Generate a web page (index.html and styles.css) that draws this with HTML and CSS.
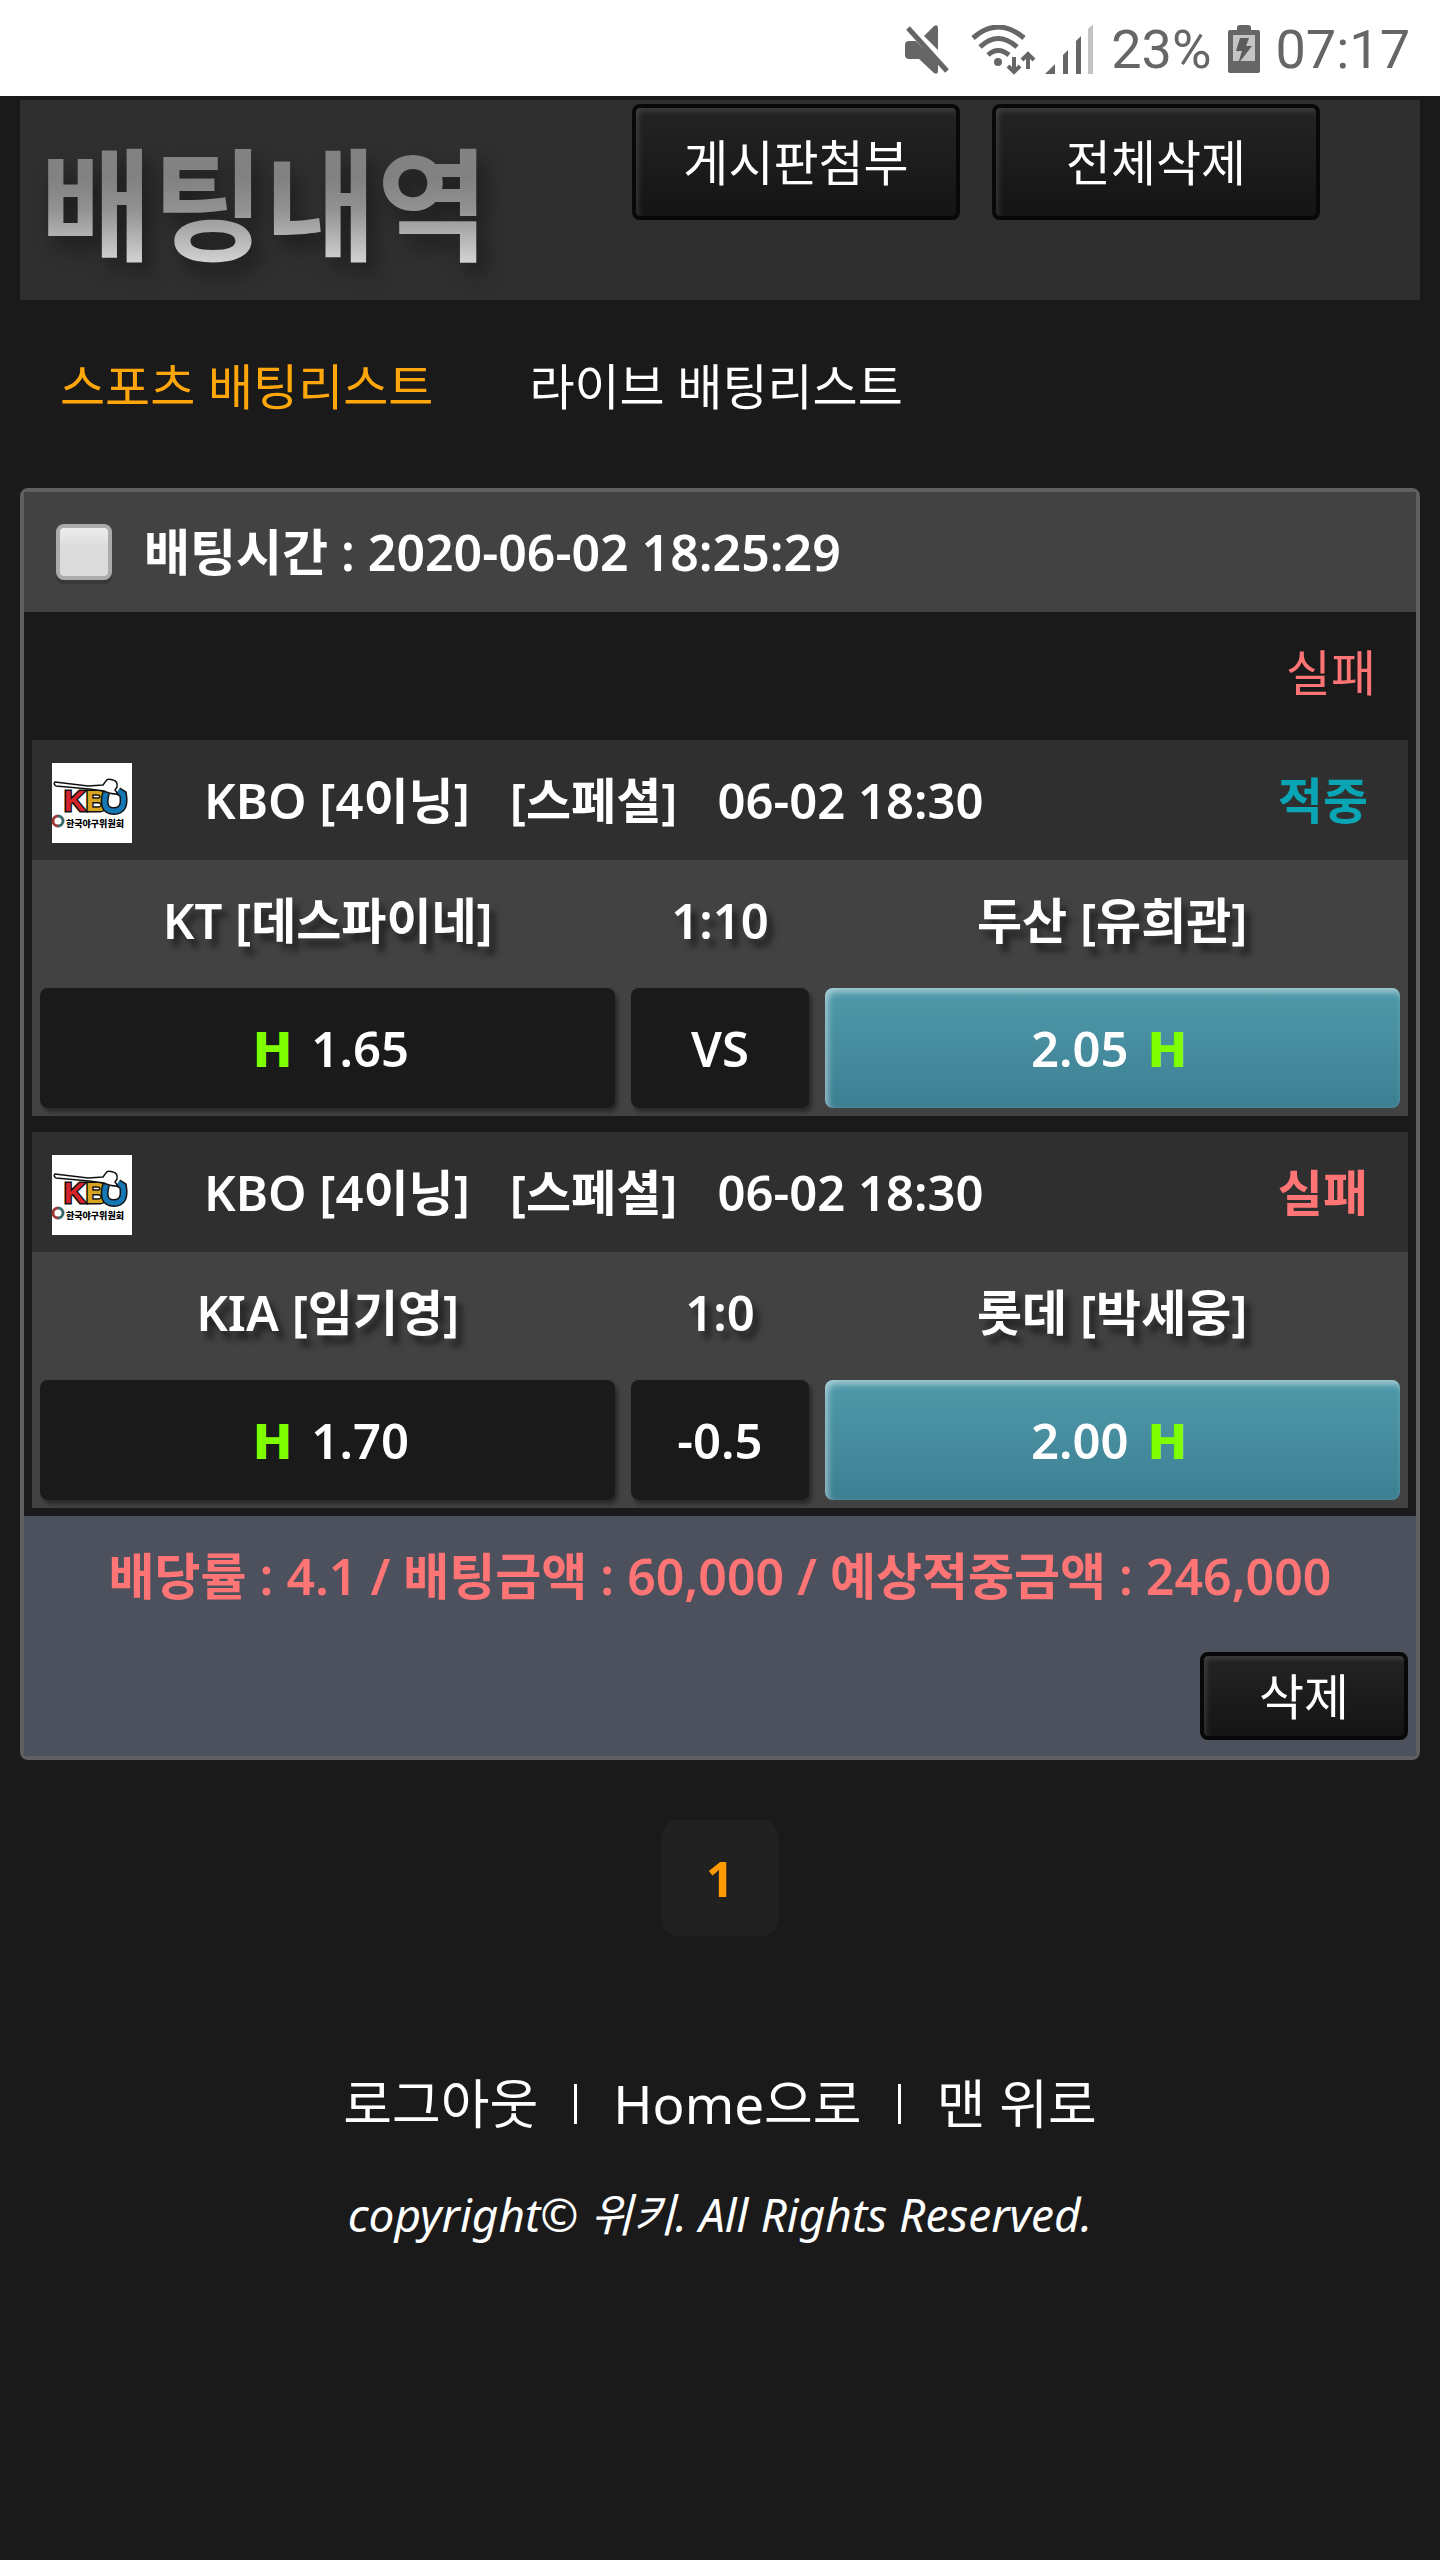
FILE: index.html
```html
<!DOCTYPE html>
<html lang="ko">
<head>
    <meta charset="UTF-8">
    <meta name="viewport" content="width=device-width, initial-scale=1.0">
    <title>배팅내역</title>
    <link rel="stylesheet" href="styles.css">
</head>

<body>
    <div class="status-bar">
        <svg class="icon-mute" width="46" height="50" viewBox="0 0 46 50">
            <path d="M4 16h7L33 38v8q0 4-4 2L14 34H4q-4 0-4-4V20q0-4 4-4z" fill="#666"/>
            <path d="M19 11L29 1q4-2 4 2v22z" fill="#666"/>
            <path d="M5 1l39 43" stroke="#fff" stroke-width="5"/>
            <path d="M3 3l39 43" stroke="#666" stroke-width="5"/>
        </svg>
        <svg class="icon-wifi" width="66" height="50" viewBox="0 0 66 50">
            <g fill="none" stroke="#666" stroke-width="5">
                <path d="M2 13Q27-9 53 13"/>
                <path d="M9 22Q27 5 46 22"/>
                <path d="M17 30Q27 21 38 30"/>
            </g>
            <circle cx="27" cy="37" r="4" fill="#666"/>
            <path d="M43 32v15M37 41l6 6 6-6M57 44V29M51 35l6-6 6 6" fill="none" stroke="#666" stroke-width="4"/>
        </svg>
        <svg class="icon-signal" width="50" height="50" viewBox="0 0 50 50">
            <path d="M0 49l10-10v10zM18 49V30l5-5v24zM31 49V16l5-5v38z" fill="#666"/>
            <path d="M43 49V4l5-5v50z" fill="#c4c4c4"/>
        </svg>
        <span>23%</span>
        <svg class="icon-battery" width="32" height="50" viewBox="0 0 32 50">
            <path d="M9 5V3q0-3 3-3h8q3 0 3 3v2h7q2 0 2 2v39q0 2-2 2H2q-2 0-2-2V7q0-2 2-2z" fill="#666"/>
            <path d="M5 10h22v26H5z" fill="#c4c4c4"/>
            <path d="M12 13h9l-3 8h6L10 39l4-13H8z" fill="#5c5c5c"/>
        </svg>
        <span>07:17</span>
    </div>

    <header class="page-header">
        <h1>배팅내역</h1>
        <div class="header-buttons">
            <button type="button" class="btn">게시판첨부</button>
            <button type="button" class="btn">전체삭제</button>
        </div>
    </header>

    <nav class="tabs">
        <a href="#" class="active">스포츠 배팅리스트</a>
        <a href="#">라이브 배팅리스트</a>
    </nav>

    <main class="bet">
        <div class="bet-time">
            <input type="checkbox" id="bet1">
            <label for="bet1">배팅시간 : 2020-06-02 18:25:29</label>
        </div>
        <div class="bet-result fail">실패</div>

        <div class="match">
            <div class="match-head">
                <svg class="league-logo" width="80" height="80" viewBox="0 0 80 80">
                    <rect width="80" height="80" fill="#fff"/>
                    <text class="logo-letters" x="12" y="48"><tspan fill="#d8232a">K</tspan><tspan fill="#d9a520">B</tspan></text>
                    <path d="M54 30q-5 18 8 18 12 0 9-17l-5-3" fill="none" stroke="#111" stroke-width="8"/>
                    <path d="M54 30q-5 18 8 18 12 0 9-17l-5-3" fill="none" stroke="#1677b5" stroke-width="5"/>
                    <path d="M3 19l33 4 15-1 3-4q1-3 7-1 5 1 4 7l-2 3 3 4q-9 0-14-3l-15-2-33-3q-3-2-1-4z" fill="#fff" stroke="#111" stroke-width="1.5"/>
                    <path d="M6 53a5 5 0 0 0 0 10" fill="none" stroke="#a33a3a" stroke-width="3"/>
                    <path d="M6 53a5 5 0 0 1 0 10" fill="none" stroke="#3a6a6a" stroke-width="3"/>
                    <text class="logo-name" x="14" y="64">한국야구위원회</text>
                </svg>
                <div class="match-info">
                    <span>KBO [4이닝]</span>
                    <span>[스페셜]</span>
                    <span>06-02 18:30</span>
                </div>
                <strong class="win">적중</strong>
            </div>
            <div class="match-body">
                <div class="team">KT [데스파이네]</div>
                <div class="team">1:10</div>
                <div class="team">두산 [유희관]</div>
                <div class="odds"><b class="handi">H</b> 1.65</div>
                <div class="odds">VS</div>
                <div class="odds picked">2.05 <b class="handi">H</b></div>
            </div>
        </div>

        <div class="match">
            <div class="match-head">
                <svg class="league-logo" width="80" height="80" viewBox="0 0 80 80">
                    <rect width="80" height="80" fill="#fff"/>
                    <text class="logo-letters" x="12" y="48"><tspan fill="#d8232a">K</tspan><tspan fill="#d9a520">B</tspan></text>
                    <path d="M54 30q-5 18 8 18 12 0 9-17l-5-3" fill="none" stroke="#111" stroke-width="8"/>
                    <path d="M54 30q-5 18 8 18 12 0 9-17l-5-3" fill="none" stroke="#1677b5" stroke-width="5"/>
                    <path d="M3 19l33 4 15-1 3-4q1-3 7-1 5 1 4 7l-2 3 3 4q-9 0-14-3l-15-2-33-3q-3-2-1-4z" fill="#fff" stroke="#111" stroke-width="1.5"/>
                    <path d="M6 53a5 5 0 0 0 0 10" fill="none" stroke="#a33a3a" stroke-width="3"/>
                    <path d="M6 53a5 5 0 0 1 0 10" fill="none" stroke="#3a6a6a" stroke-width="3"/>
                    <text class="logo-name" x="14" y="64">한국야구위원회</text>
                </svg>
                <div class="match-info">
                    <span>KBO [4이닝]</span>
                    <span>[스페셜]</span>
                    <span>06-02 18:30</span>
                </div>
                <strong class="fail">실패</strong>
            </div>
            <div class="match-body">
                <div class="team">KIA [임기영]</div>
                <div class="team">1:0</div>
                <div class="team">롯데 [박세웅]</div>
                <div class="odds"><b class="handi">H</b> 1.70</div>
                <div class="odds">-0.5</div>
                <div class="odds picked">2.00 <b class="handi">H</b></div>
            </div>
        </div>

        <div class="bet-summary">
            <p>배당률 : 4.1 / 배팅금액 : 60,000 / 예상적중금액 : 246,000</p>
            <button type="button" class="btn btn-small">삭제</button>
        </div>
    </main>

    <div class="paging">
        <a href="#">1</a>
    </div>

    <footer>
        <div class="footer-links">
            <a href="#">로그아웃</a>
            <span class="bar"></span>
            <a href="#">Home으로</a>
            <span class="bar"></span>
            <a href="#">맨 위로</a>
        </div>
        <p class="copyright">copyright© 위키. All Rights Reserved.</p>
    </footer>
</body>
</html>
```
FILE: styles.css
```css
* {
    box-sizing: border-box;
}
body {
    margin: 0;
    min-height: 100vh;
    background-color: #1a1a1a;
    color: #fff;
    font-family: "Noto Sans", "Noto Sans CJK KR", sans-serif;
    font-size: 49px;
    font-weight: 400;
    line-height: 64px;
}
a {
    color: #fff;
    text-decoration: none;
}

/* phone status bar */
.status-bar {
    display: flex;
    justify-content: flex-end;
    align-items: center;
    height: 96px;
    padding: 4px 30px 0 0;
    background-color: #fff;
    color: #666;
    font-family: Roboto, sans-serif;
    font-size: 54px;
}
.icon-mute {
    margin-right: 20px;
}
.icon-wifi {
    margin-right: 8px;
}
.icon-signal,
.icon-battery {
    margin-right: 16px;
}
.icon-battery {
    margin-left: 16px;
}

/* title */
.page-header {
    display: flex;
    margin: 4px 20px 0;
    height: 200px;
    background-color: #2f2f2f;
}
.page-header h1 {
    margin: 0;
    padding: 32px 0 0 20px;
    width: 612px;
    font-size: 122px;
    font-weight: 700;
    line-height: 144px;
    color: transparent;
    background: linear-gradient(#828282 40%, #929292 55%, #d4d4d4 82%);
    -webkit-background-clip: text;
    background-clip: text;
    filter: drop-shadow(8px 12px 10px rgba(0, 0, 0, 0.4));
}
.header-buttons {
    display: flex;
    align-items: flex-start;
    gap: 32px;
    padding-top: 4px;
}
.btn {
    width: 328px;
    height: 116px;
    padding: 0;
    border: 4px solid #080808;
    border-radius: 8px;
    background: linear-gradient(#242424, #141414);
    box-shadow: inset 3px 3px 5px rgba(255, 255, 255, 0.12);
    color: #fff;
    font: inherit;
    cursor: pointer;
}
.btn-small {
    width: 208px;
    height: 88px;
}

.tabs {
    display: flex;
    gap: 96px;
    padding: 54px 60px 70px;
}
.tabs .active {
    color: #ffa60a;
}

/* one bet slip */
.bet {
    margin: 0 20px;
    border: 4px solid #5f5f5f;
    border-radius: 8px;
}
.bet-time {
    display: flex;
    align-items: center;
    gap: 32px;
    height: 120px;
    padding-left: 32px;
    background-color: #424242;
    font-size: 50px;
    font-weight: 600;
}
.bet-time input {
    appearance: none;
    width: 56px;
    height: 56px;
    margin: 0;
    border: 4px solid #acacac;
    border-radius: 8px;
    background: linear-gradient(#ececec, #dcdcdc 40%);
    box-shadow: 0 4px 0 #383838;
}
.bet-result {
    height: 128px;
    padding: 28px 40px;
    text-align: right;
}
.fail {
    color: #ff7575;
}
.win {
    color: #0aa5b5;
}

.match {
    margin: 0 8px 16px;
    background-color: #424242;
    font-weight: 600;
}
.match-head {
    display: flex;
    align-items: center;
    height: 120px;
    padding: 0 40px 0 20px;
    background-color: #2f2f2f;
}
.match-head strong {
    margin-left: auto;
    font-weight: 700;
}
.league-logo {
    margin: 6px 72px 0 0;
}
.logo-letters {
    font-family: "Liberation Sans", sans-serif;
    font-size: 30px;
    font-weight: 700;
    stroke: #111;
    stroke-width: 3px;
    paint-order: stroke;
}
.logo-name {
    font-family: "Noto Sans CJK KR", sans-serif;
    font-size: 9px;
    font-weight: 900;
}
.match-info {
    display: flex;
    gap: 40px;
}
.match-body {
    display: grid;
    grid-template-columns: 13fr 4fr 13fr;
    column-gap: 16px;
    padding: 0 8px 8px;
    text-align: center;
}
.team {
    height: 128px;
    line-height: 120px;
    text-shadow: 6px 8px 6px rgba(0, 0, 0, 0.5);
}
.odds {
    height: 120px;
    border-radius: 8px;
    background-color: #1a1a1a;
    box-shadow: 3px 4px 4px rgba(0, 0, 0, 0.4);
    line-height: 120px;
}
.picked {
    background: linear-gradient(#4f9aaa, #3c7f93);
    box-shadow: inset 3px 4px 6px rgba(255, 255, 255, 0.5);
}
.handi {
    margin: 0 6px;
    color: #7fff00;
    font-family: "DejaVu Sans", sans-serif;
    font-size: 48px;
}

.bet-summary {
    display: flex;
    flex-direction: column;
    align-items: flex-end;
    margin-top: -8px;
    padding: 28px 8px 16px;
    background-color: #4c515d;
}
.bet-summary p {
    align-self: stretch;
    margin: 0 0 44px;
    color: #ff7575;
    font-size: 50px;
    font-weight: 600;
    text-align: center;
}

.paging {
    display: flex;
    justify-content: center;
    margin: 60px 0 136px;
}
.paging a {
    width: 116px;
    border-radius: 16px;
    background-color: #212121;
    color: #ff9a00;
    font-weight: 700;
    line-height: 116px;
    text-align: center;
}

footer {
    text-align: center;
}
.footer-links {
    display: flex;
    justify-content: center;
    align-items: center;
    gap: 36px;
    font-size: 53px;
}
.bar {
    width: 3px;
    height: 40px;
    background-color: #fff;
}
.copyright {
    margin: 46px 0 0;
    font-size: 46px;
    font-style: italic;
}
```
